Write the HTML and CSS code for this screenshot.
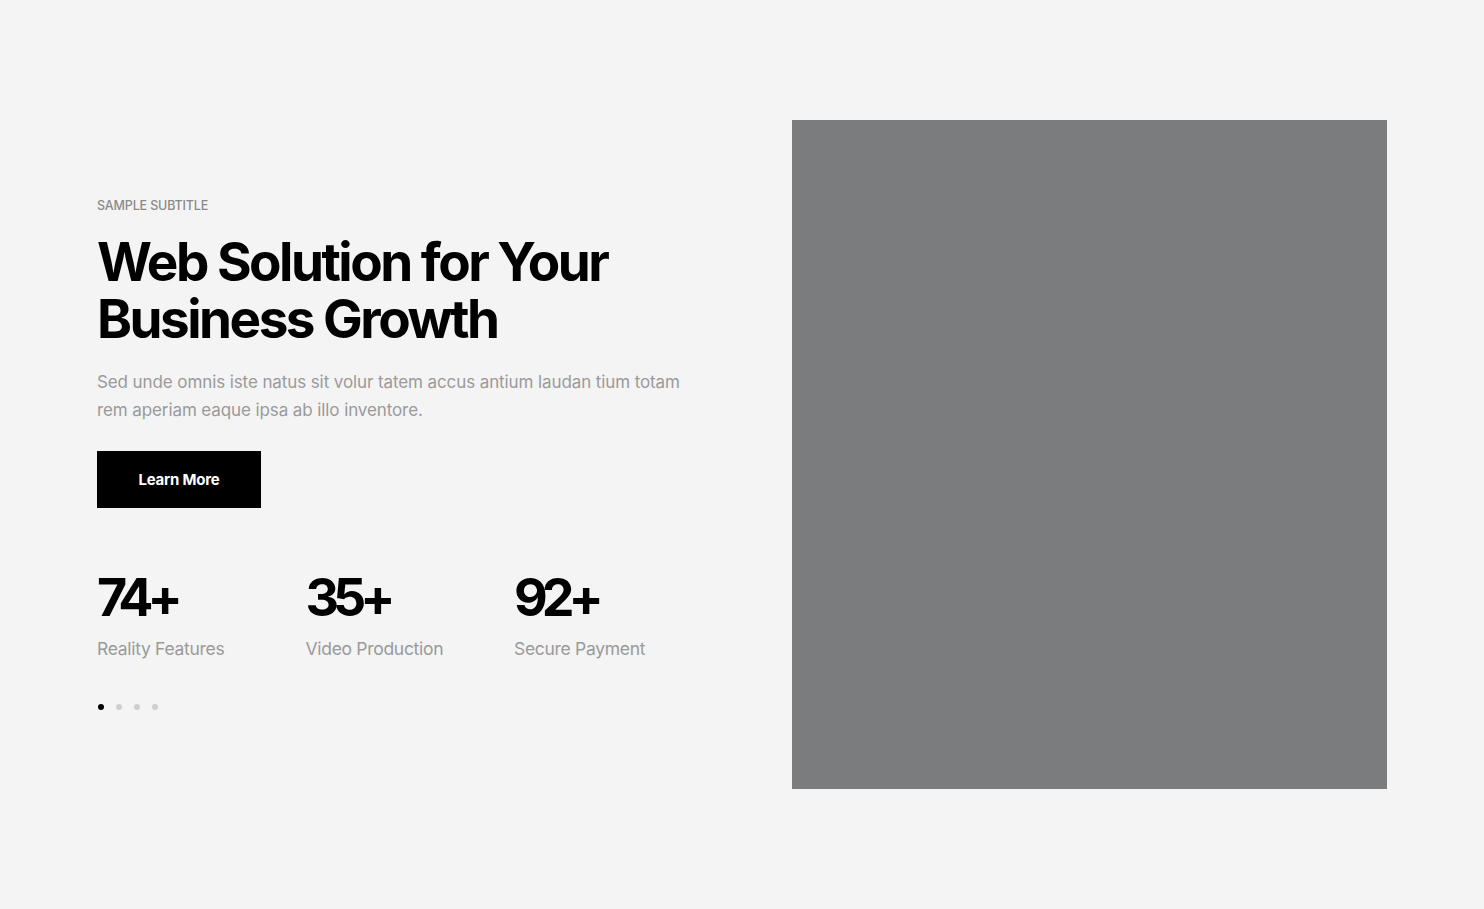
FILE: index.html
```html
<!DOCTYPE html>
<html lang="en">
<head>
<meta charset="utf-8">
<title>Web Solution</title>
<link rel="stylesheet" href="styles.css">
</head>
<body>
<section class="hero">
  <div class="hero-inner">
    <div class="content">
      <p class="subtitle">SAMPLE SUBTITLE</p>
      <h1 class="title">Web Solution for Your<br>Business Growth</h1>
      <p class="lead">Sed unde omnis iste natus sit volur tatem accus antium laudan tium totam rem aperiam eaque ipsa ab illo inventore.</p>
      <a class="btn" href="#">Learn More</a>
      <div class="stats">
        <div class="stat"><div class="num">74+</div><div class="label">Reality Features</div></div>
        <div class="stat"><div class="num">35+</div><div class="label">Video Production</div></div>
        <div class="stat"><div class="num">92+</div><div class="label">Secure Payment</div></div>
      </div>
      <div class="dots">
        <span class="dot active"></span><span class="dot"></span><span class="dot"></span><span class="dot"></span>
      </div>
    </div>
    <div class="media"></div>
  </div>
</section>
</body>
</html>
```
FILE: styles.css
```css
* { box-sizing: border-box; }
html, body { margin: 0; padding: 0; }
body {
  background: #f4f4f4;
  font-family: Inter, "Noto Sans", "Liberation Sans", sans-serif;
  color: #000;
}
.hero {
  height: 909px;
  display: flex;
  align-items: center;
}
.hero-inner {
  width: 100%;
  padding: 0 97px;
  display: grid;
  grid-template-columns: minmax(0, 1fr) 595px;
  gap: 100px;
  align-items: center;
}
.media {
  height: 669px;
  background: #7b7c7e;
}
.subtitle {
  margin: 0;
  font-size: 12.5px;
  font-weight: 500;
  color: #8a8a8a;
  letter-spacing: -0.15px;
  line-height: 16px;
}
.title {
  margin: 20px 0 0;
  font-size: 53px;
  font-weight: 700;
  line-height: 57px;
  letter-spacing: -2.5px;
}
.lead {
  margin: 20px 0 0;
  font-size: 17px;
  line-height: 28px;
  color: #9a9a9a;
  letter-spacing: -0.1px;
  max-width: 600px;
}
.btn {
  display: inline-flex;
  align-items: center;
  justify-content: center;
  margin-top: 27px;
  width: 164px;
  height: 57px;
  background: #000;
  color: #fff;
  text-decoration: none;
  font-size: 15px;
  font-weight: 700;
  letter-spacing: -0.2px;
}
.stats {
  display: flex;
  margin-top: 63px;
}
.stat { width: 208.5px; flex: none; }
.num {
  font-size: 52px;
  font-weight: 700;
  line-height: 54px;
  letter-spacing: -6px;
}
.label {
  margin-top: 13px;
  font-size: 17.5px;
  color: #9a9a9a;
  letter-spacing: -0.3px;
  line-height: 22px;
}
.dots {
  display: flex;
  gap: 12px;
  margin: 44px 0 1px;
  padding-left: 1px;
}
.dot {
  width: 6px;
  height: 6px;
  border-radius: 50%;
  background: #cfcfcf;
}
.dot.active { background: #000; }
```
